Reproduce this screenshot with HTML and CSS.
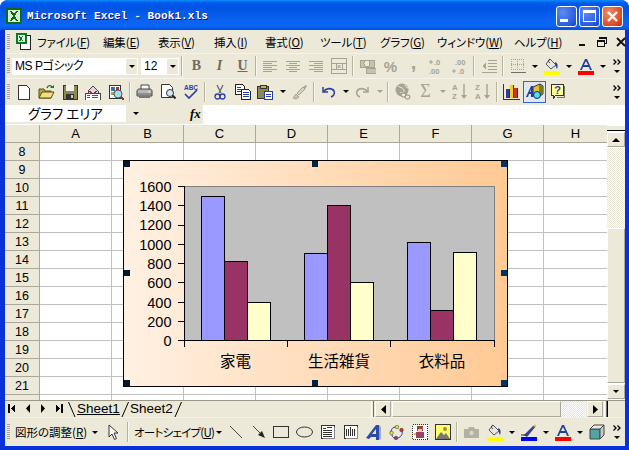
FILE: index.html
```html
<!DOCTYPE html>
<html lang="ja">
<head>
<meta charset="utf-8">
<title>Microsoft Excel - Book1.xls</title>
<link rel="stylesheet" href="styles.css">
</head>
<body>
<div class="window">
  <header class="titlebar">
    <svg class="app-icon" width="16" height="16" viewBox="0 0 16 16" shape-rendering="crispEdges"><rect width="16" height="16" fill="#0a6b14"/><rect x="2" y="2" width="12" height="12" fill="#d8ead8"/><path d="M4 3h2l2 3 2-3h2L9 8l3 5h-2L8 10l-2 3H4l3-5z" fill="#0a6b14"/></svg>
    <span class="title-text">Microsoft Excel - Book1.xls</span>
    <div class="caption-buttons">
      <span class="cap cap-min"><i class="min-glyph"></i></span>
      <span class="cap cap-max"><i class="max-glyph"></i></span>
      <span class="cap cap-close"><svg width="13" height="13" viewBox="0 0 13 13"><path d="M2 2l9 9M11 2l-9 9" stroke="#fff" stroke-width="2.4"/></svg></span>
    </div>
  </header>

  <div class="client">
    <nav class="menubar">
      <i class="grip"></i>
      <svg class="doc-icon" width="17" height="17" viewBox="0 0 17 17" shape-rendering="crispEdges"><path d="M5 2h10v14H5z" fill="#fff" stroke="#222"/><path d="M15 4h1v13H7v-1h8z" fill="#222"/><rect x="1" y="0" width="11" height="11" fill="#0a7a20"/><rect x="3" y="2" width="7" height="7" fill="#e4f0e4"/><path d="M4 3h1l1 2 1-2h1L7 6l1 2H7L6 7 5 8H4l1-2z" fill="#0a7a20"/></svg>
      <ul class="menu-items">
        <li class="mi m1">ファイル(<u>F</u>)</li>
        <li class="mi m2">編集(<u>E</u>)</li>
        <li class="mi m3">表示(<u>V</u>)</li>
        <li class="mi m4">挿入(<u>I</u>)</li>
        <li class="mi m5">書式(<u>O</u>)</li>
        <li class="mi m6">ツール(<u>T</u>)</li>
        <li class="mi m7">グラフ(<u>G</u>)</li>
        <li class="mi m8">ウィンドウ(<u>W</u>)</li>
        <li class="mi m9">ヘルプ(<u>H</u>)</li>
      </ul>
      <div class="doc-controls">
        <svg width="12" height="12" viewBox="0 0 12 12" shape-rendering="crispEdges"><rect x="2" y="8" width="6" height="2" fill="#111"/></svg>
        <svg width="12" height="12" viewBox="0 0 12 12" shape-rendering="crispEdges"><path d="M3.500 1.500h7v6h-2M1.500 4.500h7v6h-7z" fill="none" stroke="#111"/><path d="M3 1h8v2H3zM1 4h8v2H1z" fill="#111"/></svg>
        <svg width="12" height="12" viewBox="0 0 12 12"><path d="M2 2l8 8M10 2l-8 8" stroke="#111" stroke-width="1.8"/></svg>
      </div>
    </nav>

    <div class="toolbar tb-format">
      <i class="grip"></i>
      <div class="combo combo-font"><span class="combo-text combo-text-font">MS Pゴシック</span><span class="combo-btn"><i class="arr"></i></span></div>
      <div class="combo combo-size"><span class="combo-text">12</span><span class="combo-btn"><i class="arr"></i></span></div>
      <i class="sep"></i>
      <span class="btn fmt-b">B</span>
      <span class="btn fmt-i">I</span>
      <span class="btn fmt-u">U</span>
      <i class="sep sep-narrow"></i>
      <span class="btn"><svg width="16" height="16" viewBox="0 0 16 16" shape-rendering="crispEdges"><path d="M1 3h14M1 5h9M1 7h14M1 9h9M1 11h14M1 13h9" stroke="#a5a392"/></svg></span>
      <span class="btn"><svg width="16" height="16" viewBox="0 0 16 16" shape-rendering="crispEdges"><path d="M1 3h14M4 5h8M1 7h14M4 9h8M1 11h14M4 13h8" stroke="#a5a392"/></svg></span>
      <span class="btn"><svg width="16" height="16" viewBox="0 0 16 16" shape-rendering="crispEdges"><path d="M1 3h14M6 5h9M1 7h14M6 9h9M1 11h14M6 13h9" stroke="#a5a392"/></svg></span>
      <span class="btn"><svg width="16" height="16" viewBox="0 0 16 16" shape-rendering="crispEdges"><path d="M.5 .5h15v15H.5zM1 5h14M1 11h14M5 5v6M11 5v6" fill="none" stroke="#a5a392"/><text x="8" y="10" class="tiny-grey" text-anchor="middle">a</text></svg></span>
      <i class="sep"></i>
      <span class="btn"><svg width="16" height="16" viewBox="0 0 16 16" shape-rendering="crispEdges"><path d="M0 2h14v7H0zM6 10h10v5H6z" fill="#c4c2b0" stroke="#a5a392"/><circle cx="7" cy="5.500" r="3" fill="#ece9d8" stroke="#a5a392"/></svg></span>
      <span class="btn pct">%</span>
      <span class="btn comma">,</span>
      <span class="btn"><svg width="16" height="17" viewBox="0 0 16 17"><text x="5" y="7" class="num-grey">.0</text><text x="0" y="16" class="num-grey">.00</text><path d="M0 4h4M2 2v4" stroke="#a5a392"/></svg></span>
      <span class="btn"><svg width="16" height="17" viewBox="0 0 16 17"><text x="3" y="7" class="num-grey">.00</text><text x="6" y="16" class="num-grey">.0</text><path d="M0 13h4M2 11v4" stroke="#a5a392"/></svg></span>
      <i class="sep"></i>
      <span class="btn"><svg width="16" height="16" viewBox="0 0 16 16" shape-rendering="crispEdges"><path d="M7 2h9M7 5h9M7 8h9M7 11h9M1 14h15" stroke="#a5a392"/><path d="M5 5v6L1 8z" fill="#a5a392"/></svg></span>
      <i class="sep"></i>
      <span class="btn"><svg width="16" height="16" viewBox="0 0 16 16" shape-rendering="crispEdges"><path d="M1 1.500h13M1 6.500h13M1 11.500h13M1.500 1v11M7.500 1v11M13.500 1v11" fill="none" stroke="#a5a392" stroke-dasharray="1 1"/><path d="M1 14h15" stroke="#6f6e60"/></svg></span>
      <span class="btn-arr"><i class="arr"></i></span>
      <span class="btn"><svg width="16" height="17" viewBox="0 0 16 17"><path d="M6 1l6 6-5 4-5-5z" fill="#e8e8e0" stroke="#555"/><path d="M6 1c-2 1-2 3 0 4" fill="none" stroke="#333"/><path d="M11 4c3 1 3 4 2 7-1-2-2-4-2-7z" fill="#2c3f9a"/><rect y="13" width="16" height="4" fill="#ffff00"/></svg></span>
      <span class="btn-arr"><i class="arr"></i></span>
      <span class="btn"><svg width="16" height="17" viewBox="0 0 16 17"><path d="M2 12L7 1h2l5 11h-2l-1-3H5l-1 3zM6 7h4L8 3z" fill="#1f3f9a" fill-rule="evenodd"/><rect y="13" width="16" height="4" fill="#ff0000"/></svg></span>
      <span class="btn-arr"><i class="arr"></i></span>
      <span class="overflow"><svg width="9" height="6" viewBox="0 0 9 6"><path d="M.5 .5L3 3 .5 5.500M4.500 .5L7 3 4.500 5.500" fill="none" stroke="#000" stroke-width="1.300"/></svg><i class="arr"></i></span>
    </div>

    <div class="toolbar tb-standard">
      <i class="grip"></i>
      <span class="btn"><svg width="16" height="16" viewBox="0 0 16 16" shape-rendering="crispEdges"><path d="M2.500 1.500h8l3 3v11h-11z" fill="#fff" stroke="#333"/></svg></span>
      <span class="btn"><svg width="17" height="16" viewBox="0 0 17 16"><path d="M1 5h5l1 2h6v7H1z" fill="#b8a838" stroke="#5a4f10"/><path d="M1 14l3-6h12l-3 6z" fill="#f0e080" stroke="#5a4f10"/><path d="M9 4c1-3 4-3 5-1" fill="none" stroke="#1a7a1a" stroke-width="1.300"/><path d="M12 4h4V1z" fill="#1a7a1a"/></svg></span>
      <span class="btn"><svg width="16" height="16" viewBox="0 0 16 16" shape-rendering="crispEdges"><rect x="1" y="1" width="14" height="14" fill="#8c8a54" stroke="#333"/><rect x="4" y="1" width="8" height="6" fill="#f0f0f0"/><rect x="4" y="10" width="8" height="5" fill="#333"/><rect x="9" y="11" width="2" height="3" fill="#ccc"/></svg></span>
      <span class="btn"><svg width="17" height="16" viewBox="0 0 17 16" shape-rendering="crispEdges"><path d="M4 7l5-5 5 5v5H4z" fill="#d8d8e8" stroke="#444"/><path d="M4 6l5 4 5-4" fill="none" stroke="#a03030"/><rect x="1" y="9" width="15" height="7" fill="#fff" stroke="#444"/><path d="M3 11h3M3 13h3M8 11h6M8 13h6" stroke="#555"/></svg></span>
      <span class="btn"><svg width="16" height="16" viewBox="0 0 16 16" shape-rendering="crispEdges"><path d="M1.500 1.500h11v13h-11z" fill="#fff" stroke="#333"/><rect x="3" y="3" width="4" height="4" fill="#3a6ea5"/><rect x="8" y="3" width="3" height="4" fill="#b03030"/><rect x="3" y="8" width="3" height="3" fill="#a8a060"/><circle cx="10" cy="10" r="4" fill="#9fe0e8" stroke="#555" shape-rendering="auto"/><path d="M13 13l3 3" stroke="#c02020" stroke-width="2"/></svg></span>
      <i class="sep"></i>
      <span class="btn"><svg width="17" height="16" viewBox="0 0 17 16"><path d="M5 1h8v5H5z" fill="#fff" stroke="#444"/><path d="M1 7c0-1 1-2 2-2h11c1 0 2 1 2 2v5H1z" fill="#b8b8b8" stroke="#444"/><path d="M1 10h15" stroke="#666"/><path d="M3 12h11v2H3z" fill="#777"/><rect x="12" y="7" width="2" height="1.500" fill="#ee8"/></svg></span>
      <span class="btn"><svg width="16" height="16" viewBox="0 0 16 16"><path d="M1.500 .5h8l3 3v10h-11z" fill="#fff" stroke="#333"/><circle cx="10" cy="9" r="3.500" fill="#cfeaf0" stroke="#334"/><path d="M12.500 11.500l3 3" stroke="#222" stroke-width="2"/></svg></span>
      <span class="btn"><svg width="16" height="16" viewBox="0 0 16 16"><text x="8" y="6" class="abc" text-anchor="middle">ABC</text><path d="M2 10l4 4 8-8" fill="none" stroke="#2c3fa0" stroke-width="1.700"/></svg></span>
      <i class="sep"></i>
      <span class="btn"><svg width="12" height="16" viewBox="0 0 12 16"><path d="M3 1l4 8M9 1L5 9" stroke="#666" stroke-width="1.300"/><circle cx="3.500" cy="12.500" r="2.500" fill="none" stroke="#2c3fa0" stroke-width="1.300"/><circle cx="8.500" cy="12.500" r="2.500" fill="none" stroke="#2c3fa0" stroke-width="1.300"/></svg></span>
      <span class="btn"><svg width="16" height="16" viewBox="0 0 16 16" shape-rendering="crispEdges"><path d="M.5 .5h7l2 2v8h-9z" fill="#fff" stroke="#222"/><path d="M2 3h4M2 5h5M2 7h5" stroke="#444"/><path d="M6.500 5.500h7l2 2v8h-9z" fill="#fff" stroke="#222"/><path d="M8 8h6M8 10h6M8 12h6" stroke="#1f3f9a"/></svg></span>
      <span class="btn"><svg width="17" height="16" viewBox="0 0 17 16" shape-rendering="crispEdges"><rect x=".5" y="2.500" width="11" height="12" fill="#8c8a54" stroke="#333"/><rect x="3" y="1" width="6" height="3" fill="#d0b040" stroke="#333"/><path d="M7.500 7.500h8v8h-8z" fill="#fff" stroke="#1f3f9a"/><path d="M9 10h5M9 12h5" stroke="#1f3f9a"/></svg></span>
      <span class="btn-arr"><i class="arr"></i></span>
      <span class="btn"><svg width="16" height="16" viewBox="0 0 16 16"><path d="M1 14l3-4 3 3-3 2z" fill="#c4c2b0" stroke="#a5a392"/><path d="M5 9l6-6 2 2-6 6z" fill="#d4d2c2" stroke="#a5a392"/><path d="M11 3l3-2 1 1-2 3z" fill="#a5a392"/></svg></span>
      <i class="sep"></i>
      <span class="btn"><svg width="15" height="14" viewBox="0 0 15 14"><path d="M2 2v5h5" fill="none" stroke="#2c3fa0" stroke-width="1.500"/><path d="M2.500 6.500C5 3 11 2.500 13 6c1 2.500-.5 5-3 6" fill="none" stroke="#2c3fa0" stroke-width="1.600"/></svg></span>
      <span class="btn-arr"><i class="arr"></i></span>
      <span class="btn"><svg width="15" height="14" viewBox="0 0 15 14"><path d="M13 2v5H8" fill="none" stroke="#a5a392" stroke-width="1.500"/><path d="M12.500 6.500C10 3 4 2.500 2 6c-1 2.500.5 5 3 6" fill="none" stroke="#a5a392" stroke-width="1.600"/></svg></span>
      <span class="btn-arr"><i class="arr arr-off"></i></span>
      <i class="sep"></i>
      <span class="btn"><svg width="16" height="17" viewBox="0 0 16 17"><circle cx="7" cy="7" r="6.500" fill="#a5a392"/><path d="M3 3c2 2 5 1 6 4s-3 4-4 2M10 2c0 2 2 3 3 3" fill="none" stroke="#ece9d8"/><rect x="6" y="10" width="5" height="4" rx="2" fill="#ece9d8" stroke="#8d8b7a"/><rect x="10" y="12" width="5" height="4" rx="2" fill="#ece9d8" stroke="#8d8b7a"/></svg></span>
      <span class="btn sigma">Σ</span>
      <span class="btn-arr"><i class="arr arr-off"></i></span>
      <span class="btn"><svg width="16" height="17" viewBox="0 0 16 17"><text x="0" y="7" class="az">A</text><text x="0" y="16" class="az">Z</text><path d="M12 1v13" stroke="#a5a392" stroke-width="1.400"/><path d="M9 12h6l-3 4z" fill="#a5a392"/></svg></span>
      <span class="btn"><svg width="16" height="17" viewBox="0 0 16 17"><text x="0" y="7" class="az">Z</text><text x="0" y="16" class="az">A</text><path d="M12 1v13" stroke="#a5a392" stroke-width="1.400"/><path d="M9 12h6l-3 4z" fill="#a5a392"/></svg></span>
      <i class="sep"></i>
      <span class="btn"><svg width="17" height="17" viewBox="0 0 17 17" shape-rendering="crispEdges"><path d="M.5 1v15h16" fill="none" stroke="#333"/><rect x="3" y="6" width="3" height="9" fill="#2c3fa0"/><rect x="7" y="2" width="3" height="13" fill="#f0d020"/><rect x="11" y="5" width="3" height="10" fill="#d03030"/><path d="M6 6v9M10 2v13M14 5v10" stroke="#333"/></svg></span>
      <span class="btn btn-active"><svg width="18" height="17" viewBox="0 0 18 17"><path d="M7 4l7-3 3 2v8l-3 2H7z" fill="#e8c020" stroke="#333"/><path d="M14 1v12" stroke="#333"/><path d="M14 3l3 0v8l-3 2z" fill="#7a7a20"/><path d="M0 14L5 3h2v11H5v-3H3l-1 3zM4 9h1V6z" fill="#1f3f9a" fill-rule="evenodd"/><circle cx="11" cy="12" r="3.500" fill="#4ce0e8" stroke="#227"/></svg></span>
      <span class="btn"><svg width="16" height="17" viewBox="0 0 16 17" shape-rendering="crispEdges"><path d="M1.500 1.500h12v11h-8l-2 3v-3h-2z" fill="#ffff99" stroke="#333"/><path d="M14 3v11H7" fill="none" stroke="#777"/><text x="7.500" y="11" class="help-q" text-anchor="middle">?</text></svg></span>
      <span class="overflow"><svg width="9" height="6" viewBox="0 0 9 6"><path d="M.5 .5L3 3 .5 5.500M4.500 .5L7 3 4.500 5.500" fill="none" stroke="#000" stroke-width="1.300"/></svg><i class="arr"></i></span>
    </div>

    <div class="formulabar">
      <div class="namebox">グラフ エリア</div>
      <span class="name-drop"><i class="arr"></i></span>
      <span class="fx">fx</span>
      <div class="formula-input"></div>
    </div>

    <div class="sheet-area">
      <div class="grid-pane">
        <div class="col-heads">
          <span class="corner"></span>
          <span class="ch">A</span><span class="ch">B</span><span class="ch">C</span><span class="ch">D</span><span class="ch">E</span><span class="ch">F</span><span class="ch">G</span><span class="ch ch-last">H</span>
        </div>
        <div class="grid-body">
          <div class="row-heads">
            <span class="rh">8</span><span class="rh">9</span><span class="rh">10</span><span class="rh">11</span><span class="rh">12</span><span class="rh">13</span><span class="rh">14</span><span class="rh">15</span><span class="rh">16</span><span class="rh">17</span><span class="rh">18</span><span class="rh">19</span><span class="rh">20</span><span class="rh">21</span><span class="rh"></span>
          </div>
          <div class="cells"></div>
          <svg class="chart" width="385" height="227" viewBox="0 0 385 227">
            <defs>
              <linearGradient id="chartBg" x1="0" x2="1" y1="0" y2="0"><stop offset="0" stop-color="#fff1e3"/><stop offset="1" stop-color="#ffc993"/></linearGradient>
            </defs>
            <rect x=".5" y=".5" width="384" height="226" fill="url(#chartBg)" stroke="#000"/>
            <rect x="61.500" y="26.500" width="310" height="154" fill="#c0c0c0" stroke="#808080"/>
            <g shape-rendering="crispEdges" stroke="#000">
              <path d="M61.500 26v155M55 26.500h7M55 45.500h7M55 65.500h7M55 84.500h7M55 103.500h7M55 122.500h7M55 142.500h7M55 161.500h7M55 180.500h317M61.500 181v6M164.500 181v6M267.500 181v6M371.500 181v6" fill="none"/>
              <g class="s1">
                <rect x="78.500" y="36.500" width="23" height="144"/>
                <rect x="181.500" y="93.500" width="23" height="87"/>
                <rect x="284.500" y="82.500" width="23" height="98"/>
              </g>
              <g class="s2">
                <rect x="101.500" y="101.500" width="23" height="79"/>
                <rect x="204.500" y="45.500" width="23" height="135"/>
                <rect x="307.500" y="150.500" width="23" height="30"/>
              </g>
              <g class="s3">
                <rect x="124.500" y="142.500" width="23" height="38"/>
                <rect x="227.500" y="122.500" width="23" height="58"/>
                <rect x="330.500" y="92.500" width="23" height="88"/>
              </g>
            </g>
            <g class="y-labels" text-anchor="end">
              <text x="48.500" y="32">1600</text><text x="48.500" y="51">1400</text><text x="48.500" y="70">1200</text><text x="48.500" y="90">1000</text><text x="48.500" y="109">800</text><text x="48.500" y="128">600</text><text x="48.500" y="148">400</text><text x="48.500" y="167">200</text><text x="48.500" y="186">0</text>
            </g>
            <g class="x-labels" text-anchor="middle">
              <text x="112.500" y="207">家電</text><text x="216" y="207">生活雑貨</text><text x="319" y="207">衣料品</text>
            </g>
            <g shape-rendering="crispEdges">
              <rect class="h-l" x="1" y="1" width="6" height="6"/><rect class="h-m" x="189" y="1" width="6" height="6"/><rect class="h-r" x="378" y="1" width="6" height="6"/>
              <rect class="h-l" x="1" y="110" width="6" height="6"/><rect class="h-r" x="378" y="110" width="6" height="6"/>
              <rect class="h-l" x="1" y="220" width="6" height="6"/><rect class="h-m" x="189" y="220" width="6" height="6"/><rect class="h-r" x="378" y="220" width="6" height="6"/>
            </g>
          </svg>
        </div>
      </div>
      <div class="vscroll">
        <i class="split-v"></i>
        <span class="sb-btn"><i class="arr arr-up"></i></span>
        <i class="track"></i>
        <i class="thumb-v"></i>
        <span class="sb-btn"><i class="arr"></i></span>
      </div>
    </div>

    <div class="tabbar">
      <div class="tab-nav">
        <svg width="8" height="9" viewBox="0 0 8 9" shape-rendering="crispEdges"><path d="M0 0h2v9H0zM7 0v9L3 4.500z" fill="#000"/></svg>
        <svg width="6" height="9" viewBox="0 0 6 9"><path d="M5 0v9L1 4.500z" fill="#000"/></svg>
        <svg width="6" height="9" viewBox="0 0 6 9"><path d="M1 0v9l4-4.500z" fill="#000"/></svg>
        <svg width="8" height="9" viewBox="0 0 8 9" shape-rendering="crispEdges"><path d="M6 0h2v9H6zM1 0v9l4-4.500z" fill="#000"/></svg>
      </div>
      <svg class="slant" width="8" height="15" viewBox="0 0 8 15"><path d="M.5 0L7 15" stroke="#000"/></svg>
      <span class="tab tab-on">Sheet1</span>
      <svg class="slant" width="8" height="15" viewBox="0 0 8 15"><path d="M7.500 0L1 15" stroke="#000"/></svg>
      <span class="tab">Sheet2</span>
      <svg class="slant" width="8" height="15" viewBox="0 0 8 15"><path d="M7.500 0L1 15" stroke="#000"/></svg>
      <div class="hscroll">
        <i class="split-h"></i>
        <span class="sb-btn-h"><svg width="5" height="9" viewBox="0 0 5 9"><path d="M5 0v9L0 4.500z" fill="#000"/></svg></span>
        <i class="thumb-h"></i>
        <i class="track-h"></i>
        <span class="sb-btn-h"><svg width="5" height="9" viewBox="0 0 5 9"><path d="M0 0v9l5-4.500z" fill="#000"/></svg></span>
        <i class="split-h"></i>
      </div>
      <i class="size-corner"></i>
    </div>

    <div class="toolbar tb-draw">
      <i class="grip"></i>
      <span class="draw-menu dm1">図形の調整(<u>R</u>)</span><span class="btn-arr"><i class="arr"></i></span>
      <span class="btn btn-cursor"><svg width="11" height="17" viewBox="0 0 11 17"><path d="M1 1v12l3-3 2.500 5.500 2-1L6 9h4z" fill="#fff" stroke="#333"/></svg></span>
      <i class="sep"></i>
      <span class="draw-menu dm2">オートシェイプ(<u>U</u>)</span><span class="btn-arr"><i class="arr"></i></span>
      <span class="btn"><svg width="14" height="14" viewBox="0 0 14 14"><path d="M1 1l12 12" stroke="#444"/></svg></span>
      <span class="btn"><svg width="14" height="14" viewBox="0 0 14 14"><path d="M1 1l8 8" stroke="#444"/><path d="M13 13L6 10l4-4z" fill="#222"/></svg></span>
      <span class="btn"><svg width="17" height="14" viewBox="0 0 17 14" shape-rendering="crispEdges"><rect x=".5" y="1.500" width="15" height="11" fill="none" stroke="#333"/></svg></span>
      <span class="btn"><svg width="17" height="14" viewBox="0 0 17 14"><ellipse cx="8.500" cy="7" rx="8" ry="5" fill="none" stroke="#333"/></svg></span>
      <span class="btn"><svg width="16" height="16" viewBox="0 0 16 16" shape-rendering="crispEdges"><rect x="1" y="1" width="13" height="13" fill="#fff" stroke="#333"/><path d="M14 3h1v12H3v-1h11z" fill="#888"/><path d="M3 4h3M3 6h9M3 8h9M3 10h9M3 12h9M7 3h5" stroke="#333"/></svg></span>
      <span class="btn"><svg width="16" height="16" viewBox="0 0 16 16" shape-rendering="crispEdges"><rect x="1" y="1" width="13" height="13" fill="#fff" stroke="#333"/><path d="M14 3h1v12H3v-1h11z" fill="#888"/><path d="M3.500 5v7M5.500 5v7M9.500 5v7M11.500 5v7M7.500 3v9" stroke="#333"/></svg></span>
      <span class="btn"><svg width="17" height="17" viewBox="0 0 17 17"><path d="M1 14L11 1h3v15h-3v-3H6l-2 2zM7 10h4V5z" fill="#2c4aa8" fill-rule="evenodd"/><path d="M14 1l2 2v12l-2 1z" fill="#9aa8c8"/></svg></span>
      <span class="btn"><svg width="15" height="15" viewBox="0 0 15 15"><path d="M7 2c-3 0-5 2-5 5M13 6c1 3-1 6-4 7M6 13c-1 0-3-1-3-3" fill="none" stroke="#2c3fa0"/><circle cx="8" cy="2" r="1.800" fill="#e8e040" stroke="#333" stroke-width=".5"/><circle cx="2.500" cy="8" r="1.800" fill="#e8e040" stroke="#333" stroke-width=".5"/><circle cx="12.500" cy="5" r="1.800" fill="#d03030" stroke="#333" stroke-width=".5"/><circle cx="7" cy="13" r="1.800" fill="#903090" stroke="#333" stroke-width=".5"/></svg></span>
      <span class="btn"><svg width="16" height="16" viewBox="0 0 16 16" shape-rendering="crispEdges"><rect x=".5" y=".5" width="15" height="15" fill="#fff" stroke="#333" stroke-dasharray="1 1"/><rect x="5" y="2" width="6" height="5" fill="#a04040"/><rect x="6" y="5" width="4" height="3" fill="#f0c8a0"/><rect x="4" y="8" width="8" height="6" fill="#a04060"/><rect x="2" y="9" width="2" height="2" fill="#e0c030"/></svg></span>
      <span class="btn"><svg width="16" height="16" viewBox="0 0 16 16"><rect x=".5" y=".5" width="15" height="15" fill="#ffff66" stroke="#333"/><circle cx="10" cy="5" r="2" fill="#b09020"/><path d="M1 15l5-7 3 3 2-2 4 6z" fill="#777"/></svg></span>
      <i class="sep"></i>
      <span class="btn"><svg width="15" height="11" viewBox="0 0 15 11"><path d="M0 2h4l1-2h5l1 2h4v9H0z" fill="#b3b1a0"/><circle cx="7.500" cy="6" r="2.200" fill="#d8d6c6"/></svg></span>
      <span class="btn"><svg width="16" height="17" viewBox="0 0 16 17"><path d="M6 1l6 6-5 4-5-5z" fill="#e8e8e0" stroke="#555"/><path d="M6 1c-2 1-2 3 0 4" fill="none" stroke="#333"/><path d="M11 4c3 1 3 4 2 7-1-2-2-4-2-7z" fill="#3a3f9a"/><rect y="13" width="16" height="4" fill="#ffff00"/></svg></span>
      <span class="btn-arr"><i class="arr"></i></span>
      <span class="btn"><svg width="16" height="17" viewBox="0 0 16 17"><path d="M3 11L13 1l2 1-9 11z" fill="#3a3f9a"/><path d="M12 2l2-2 1 2-1 1z" fill="#e8d040"/><path d="M0 11h5" stroke="#222"/><rect y="13" width="16" height="4" fill="#0000ff"/></svg></span>
      <span class="btn-arr"><i class="arr"></i></span>
      <span class="btn"><svg width="16" height="17" viewBox="0 0 16 17"><path d="M2 12L7 1h2l5 11h-2l-1-3H5l-1 3zM6 7h4L8 3z" fill="#1f3f9a" fill-rule="evenodd"/><rect y="13" width="16" height="4" fill="#ff0000"/></svg></span>
      <span class="btn-arr"><i class="arr"></i></span>
      <span class="btn"><svg width="16" height="16" viewBox="0 0 16 16"><path d="M1 5h10v10H1z" fill="#4fa5a5" stroke="#444"/><path d="M1 5l4-4h10l-4 4z" fill="#e8e8e8" stroke="#444"/><path d="M11 5l4-4v10l-4 4z" fill="#c8c8c8" stroke="#444"/></svg></span>
      <span class="overflow"><svg width="9" height="6" viewBox="0 0 9 6"><path d="M.5 .5L3 3 .5 5.500M4.500 .5L7 3 4.500 5.500" fill="none" stroke="#000" stroke-width="1.300"/></svg><i class="arr"></i></span>
    </div>
  </div>
</div>
</body>
</html>
```
FILE: styles.css
```css
* { box-sizing: border-box; }
html, body { margin: 0; padding: 0; background: #fff; }
body { width: 629px; height: 450px; overflow: hidden; font-family: "Liberation Sans", "Noto Sans CJK JP", sans-serif; font-size: 12px; color: #000; }
i { display: block; font-style: normal; }
ul { list-style: none; margin: 0; padding: 0; }

.window { width: 629px; height: 450px; display: flex; flex-direction: column; border-radius: 8px 8px 0 0; overflow: hidden; background: #0831d9; }

/* title bar */
.titlebar { flex: 0 0 30px; display: flex; align-items: center; padding: 2px 7px 1px 6px; gap: 5px;
  background: linear-gradient(#0a8cf5 0, #0058ee 3px, #0054e3 8px, #0a62f0 20px, #0a66f5 26px, #0050dc 30px); }
.title-text { font-family: "Liberation Mono", monospace; font-weight: 700; font-size: 11px; letter-spacing: .1px; color: #fff; text-shadow: 1px 1px 0 #0f1089; }
.caption-buttons { margin-left: auto; display: flex; gap: 2px; margin-right: -1px; margin-top: 1px; }
.cap { width: 21px; height: 21px; border: 1px solid #fff; border-radius: 3px; display: flex; align-items: center; justify-content: center; position: relative;
  background: radial-gradient(circle at 30% 30%, #5c8cf0, #2a5be0 70%, #1a3fc0); }
.cap-close { background: radial-gradient(circle at 30% 30%, #ee8a6a, #dc4a22 70%, #b83010); }
.min-glyph { width: 8px; height: 3px; background: #fff; margin: 8px 4px 0 -1px; }
.max-glyph { width: 13px; height: 12px; border: 1px solid #fff; border-top-width: 3px; }

/* client */
.client { width: 620px; margin-left: 5px; height: 416px; display: flex; flex-direction: column; background: #ece9d8; }
.grip { width: 3px; height: 16px; flex: none; margin: 0 2px 0 2px;
  background: repeating-linear-gradient(#a5a392 0 1px, #ece9d8 1px 2px); }

/* menu */
.menubar { height: 23px; flex: none; display: flex; align-items: center; }
.doc-icon { margin-left: 3px; flex: none; }
.menu-items { display: flex; flex: none; white-space: nowrap; font-family: "Noto Sans CJK JP", sans-serif; font-size: 11.500px; font-feature-settings: "palt"; letter-spacing: -.15px; line-height: 20px; }
.mi { flex: none; }
.mi u { text-underline-offset: 1px; }
.m1 { margin-left: 5px; width: 66px; }
.m2 { width: 55px; }
.m3 { width: 56px; }
.m4 { width: 51px; }
.m5 { width: 55px; }
.m6 { width: 60px; }
.m7 { width: 57px; }
.m8 { width: 77px; }
.m9 { width: 63px; }
.doc-controls { display: flex; gap: 7px; margin-left: auto; margin-right: 4px; }

/* toolbars */
.toolbar { flex: none; display: flex; align-items: center; position: relative; }
.tb-format { height: 25px; border-top: 1px solid #f6f4ea; }
.tb-standard { height: 26px; border-top: 1px solid #f6f4ea; }
.tb-draw { height: 29px; border-top: 1px solid #f6f4ea; }
.btn { flex: none; width: 23px; height: 22px; display: flex; align-items: center; justify-content: center; }
.btn-arr { flex: none; width: 11px; height: 22px; display: flex; align-items: center; justify-content: center; }
.arr { width: 0; height: 0; border: 3px solid transparent; border-top: 3px solid #000; border-bottom: 0; flex: none; border-left-width: 3.500px; border-right-width: 3.500px; }
.arr-off { border-top-color: #a5a392; }
.arr-up { border-top: 0; border-bottom: 4px solid #000; border-left-width: 4px; border-right-width: 4px; }
.sep { flex: none; width: 6px; height: 20px; position: relative; }
.sep::after { content: ""; position: absolute; left: 2px; top: 0; width: 1px; height: 100%; background: #b5b3a2; box-shadow: 1px 0 0 #f8f7f0; }
.sep-narrow { width: 4px; }
.sep-narrow::after { left: 1px; }
.overflow { position: absolute; left: 607px; top: 0; bottom: 0; width: 10px; display: flex; flex-direction: column; align-items: center; justify-content: center; gap: 5px; }

/* format combos */
.combo { flex: none; height: 17px; background: #fff; display: flex; justify-content: space-between; align-items: stretch; }
.combo-font { width: 126px; margin-left: 0; }
.combo-size { width: 38px; margin-left: 3px; }
.combo-text { padding-left: 3px; line-height: 16px; font-size: 12px; font-family: "Liberation Sans", "Noto Sans CJK JP", sans-serif; font-feature-settings: "palt"; white-space: nowrap; }
.combo-text-font { letter-spacing: -.45px; font-weight: 400; }
.combo-btn { width: 11px; background: #ece9d8; display: flex; align-items: center; justify-content: center; margin: 1px 1px 1px 0; }
.fmt-b, .fmt-i, .fmt-u { font-family: "Liberation Serif", serif; font-size: 14px; font-weight: 700; color: #6e6c5e; }
.fmt-i { font-style: italic; }
.fmt-u { text-decoration: underline; }
.pct { font-family: "Liberation Sans", sans-serif; font-size: 15px; font-weight: 700; color: #a5a392; }
.comma { font-size: 20px; font-weight: 700; color: #a5a392; line-height: 14px; align-items: flex-start; }
.sigma { font-family: "Liberation Serif", serif; font-size: 18px; color: #a5a392; }
.btn-active { width: 23px; height: 22px; border: 1px solid #316ac5; background: #e1e6f0; }

svg text { font-family: "Liberation Sans", sans-serif; }
.tiny-grey { font-size: 6px; fill: #a5a392; font-weight: 700; }
.num-grey { font-size: 7.500px; fill: #a5a392; font-weight: 700; }
.abc { font-size: 6.500px; fill: #2c3fa0; font-weight: 700; }
.az { font-size: 7.800px; fill: #a5a392; font-weight: 700; }
.help-q { font-size: 11px; font-weight: 700; fill: #2c3fa0; }

/* formula bar */
.formulabar { height: 20px; flex: none; display: flex; align-items: flex-start; padding-top: 1px; }
.namebox { width: 121px; height: 17px; background: #fff; text-align: center; font-family: "Noto Sans CJK JP", sans-serif; font-size: 13.500px; line-height: 17px; font-feature-settings: "palt"; white-space: nowrap; }
.name-drop { width: 17px; height: 17px; margin-left: 1px; display: flex; align-items: center; justify-content: center; }
.fx { width: 60px; height: 17px; padding-left: 46px; font-family: "Liberation Serif", serif; font-style: italic; font-weight: 700; font-size: 13px; line-height: 17px; margin-right: -1px; flex: none; }
.formula-input { flex: 1; height: 19px; background: #fff; }

/* sheet */
.sheet-area { height: 276px; flex: none; display: flex; }
.grid-pane { width: 602px; flex: none; display: flex; flex-direction: column; overflow: hidden; }
.col-heads { height: 19px; flex: none; display: flex; border-top: 1px solid #fff; border-bottom: 1px solid #aca899; }
.corner { width: 35px; flex: none; border-right: 1px solid #aca899; }
.ch { width: 72px; flex: none; border-right: 1px solid #aca899; text-align: center; font-size: 13px; line-height: 17px; }
.ch-last { width: 63px; border-right: 0; }
.grid-body { position: relative; height: 257px; display: flex; overflow: hidden; }
.row-heads { width: 35px; flex: none; display: flex; flex-direction: column; }
.rh { height: 18px; flex: none; text-align: center; font-size: 12.500px; line-height: 18px; border-right: 1px solid #aca899; border-bottom: 1px solid #aca899; }
.cells { flex: 1; background-color: #fff;
  background-image: repeating-linear-gradient(90deg, transparent 0 71px, #c0c0c0 71px 72px), repeating-linear-gradient(transparent 0 17px, #c0c0c0 17px 18px); }
.chart { position: absolute; left: 118px; top: 17px; }
.s1 rect { fill: #9999ff; }
.s2 rect { fill: #993366; }
.s3 rect { fill: #ffffcc; }
.y-labels text { font-size: 14.500px; font-family: "Liberation Sans", sans-serif; }
.x-labels text { font-size: 15.500px; font-family: "Noto Sans CJK JP", sans-serif; }
.h-l { fill: #001a33; }
.h-m { fill: #002244; }
.h-r { fill: #003366; }

/* vertical scrollbar */
.vscroll { width: 18px; flex: none; display: flex; flex-direction: column; background: #fff; }
.split-v { height: 7px; flex: none; background: #ece9d8; border-top: 2px solid #fff; border-bottom: 1px solid #000; }
.sb-btn { height: 15px; flex: none; margin: 1px 0; background: #ece9d8; border: 1px solid #fff; border-right-color: #aca899; border-bottom-color: #aca899; display: flex; align-items: center; justify-content: center; }
.track { height: 80px; flex: none; background: #f4f3ea; background-image: conic-gradient(#e6e3d2 25%, #fff 0 50%, #e6e3d2 0 75%, #fff 0); background-size: 2px 2px; }
.thumb-v { height: 155px; flex: none; background: #ece9d8; border: 1px solid #fff; border-right-color: #aca899; border-bottom-color: #aca899; }

/* tab strip */
.tabbar { height: 17px; flex: none; display: flex; align-items: flex-start; border-top: 1px solid #9a9887; position: relative; }
.tab-nav { display: flex; align-items: center; width: 63px; padding-left: 3px; height: 14px; gap: 9px; flex: none; }
.slant { flex: none; margin-top: 1px; }
.tab { flex: none; width: 45px; text-align: center; font-size: 13.500px; line-height: 14px; padding-top: 1px; height: 16px; }
.tab-on { text-decoration: underline; text-underline-offset: 1px; }
.hscroll { position: absolute; left: 366px; top: 0; width: 236px; height: 16px; display: flex; }
.split-h { width: 3px; flex: none; background: #ece9d8; border-left: 1px solid #fff; border-right: 1px solid #716f64; }
.sb-btn-h { width: 16px; flex: none; margin: 0 1px; background: #ece9d8; border: 1px solid #fff; border-right-color: #aca899; border-bottom-color: #aca899; display: flex; align-items: center; justify-content: center; }
.thumb-h { width: 169px; flex: none; background: #ece9d8; border: 1px solid #fff; border-right-color: #aca899; border-bottom-color: #aca899; }
.track-h { width: 25px; flex: none; background-image: conic-gradient(#e6e3d2 25%, #fff 0 50%, #e6e3d2 0 75%, #fff 0); background-size: 2px 2px; }
.size-corner { position: absolute; left: 602px; top: 0; width: 18px; height: 16px; border-left: 1px solid #000; }

/* drawing toolbar */
.draw-menu { flex: none; font-family: "Noto Sans CJK JP", sans-serif; font-size: 11.500px; font-feature-settings: "palt"; white-space: nowrap; line-height: 20px; }
.dm1 { width: 74px; margin-left: 3px; }
.dm2 { width: 79px; margin-left: 3px; letter-spacing: -.75px; }
.btn-cursor { margin-left: 2px; }
```
